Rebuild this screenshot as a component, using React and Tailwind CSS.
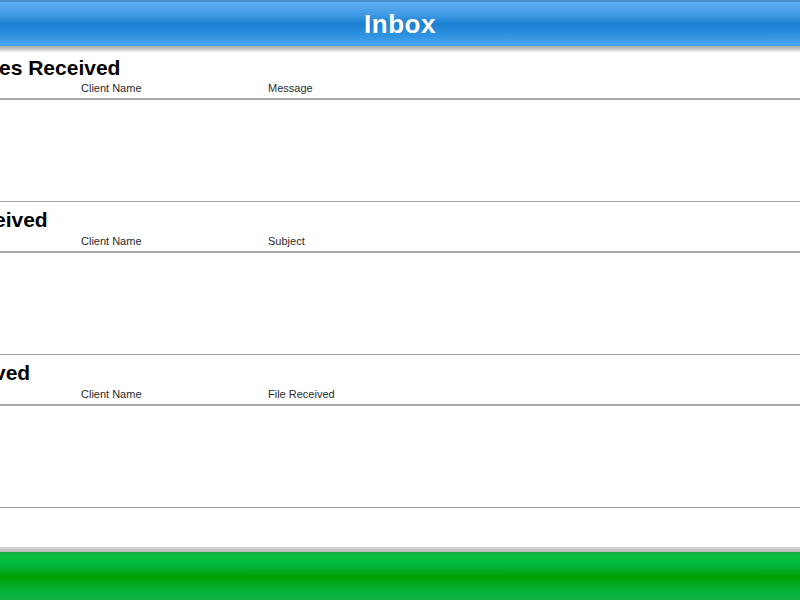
import React from 'react';

const sections = [
  { title: 'es Received', cols: ['Client Name', 'Message'], first: true, shift: '-ml-[1px]' },
  { title: 'eived', cols: ['Client Name', 'Subject'], shift: '-ml-[6px]' },
  { title: 'ved', cols: ['Client Name', 'File Received'], shift: '-ml-[6px]' },
];

const Section = ({ title, cols, first, shift }) => (
  <div className="flex flex-col">
    <div className={first ? 'h-[28px] pt-[5px]' : 'h-[31px] pt-[7px]'}>
      <h2 className={`${shift} text-[21px] leading-[22px] font-bold text-black whitespace-nowrap`}>
        {title}
      </h2>
    </div>
    <div className="h-[20px] pb-[2px] flex items-center text-[11px] text-[#2a2a2a] border-b-2 border-[#a8a8a8]">
      <span className="w-[81px]" />
      <span className="w-[187px]">{cols[0]}</span>
      <span>{cols[1]}</span>
    </div>
    <div className="h-[102px] border-b border-[#a0a0a0]" />
  </div>
);

export default function App() {
  return (
    <div className="w-[800px] h-[600px] flex flex-col overflow-hidden bg-white font-['Liberation_Sans',Arial,sans-serif]">
      {/* title bar */}
      <header className="h-[46px] flex items-center justify-center border-t-2 border-[#4a8ccc] bg-[linear-gradient(to_bottom,#60b0f4_0%,#3e98e4_30%,#1a80d0_50%,#2e92e0_75%,#4ca6ee_100%)]">
        <h1 className="text-white text-[26px] font-bold tracking-[0.5px] leading-none">Inbox</h1>
      </header>
      <div className="h-[6px] bg-[linear-gradient(to_bottom,#a8a8a8,#c8c8c8_50%,#f0f0f0)]" />

      <main className="flex-1 flex flex-col overflow-hidden">
        {sections.map((s) => (
          <Section key={s.title} {...s} />
        ))}
      </main>

      {/* status bar */}
      <div className="h-[5px] bg-[linear-gradient(to_bottom,#d8d8d8,#b8b8b8)]" />
      <footer className="h-[48px] bg-[linear-gradient(to_bottom,#1aae44_0%,#06c040_12%,#02b032_35%,#00a000_50%,#04b038_80%,#10b444_100%)]" />
    </div>
  );
}
